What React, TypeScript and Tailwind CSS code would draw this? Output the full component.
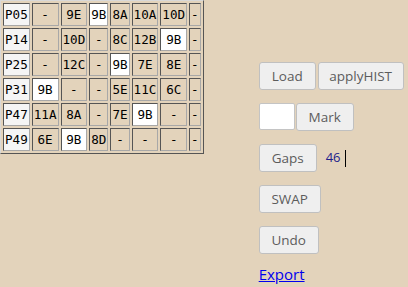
import React from 'react';

const rows: string[][] = [
  ['P05', '-', '9E', '9B', '8A', '10A', '10D', '-'],
  ['P14', '-', '10D', '-', '8C', '12B', '9B', '-'],
  ['P25', '-', '12C', '-', '9B', '7E', '8E', '-'],
  ['P31', '9B', '-', '-', '5E', '11C', '6C', '-'],
  ['P47', '11A', '8A', '-', '7E', '9B', '-', '-'],
  ['P49', '6E', '9B', '8D', '-', '-', '-', '-'],
];

function Btn({ label, className = '' }: { label: string; className?: string }) {
  return (
    <button
      className={`h-[28px] bg-[#efefef] border border-[#c0c0c0] rounded-[3px] text-[13.5px] text-[#5c5c5c] ${className || 'px-[12px]'}`}
    >
      {label}
    </button>
  );
}

export default function App() {
  return (
    <div className="w-[408px] h-[287px] bg-[#e3d3bb] flex font-['Open_Sans',sans-serif]">
      <div className="shrink-0">
        <table className="border-separate border-spacing-[2px] border border-t-[#d9d9d9] border-l-[#d9d9d9] border-r-[#555] border-b-[#555] font-['DejaVu_Sans_Mono',monospace] text-[12.6px] text-black">
          <tbody>
            {rows.map((r, i) => (
              <tr key={i}>
                {r.map((c, j) => {
                  const bg = j === 0 ? 'bg-[#f5f5f5]' : c === '9B' ? 'bg-white' : '';
                  return (
                    <td
                      key={j}
                      className={`h-[23px] px-px py-0 leading-[21px] text-center border border-t-[#555] border-l-[#555] border-r-[#a8a8a8] border-b-[#a8a8a8] ${bg}`}
                    >
                      {c}
                    </td>
                  );
                })}
              </tr>
            ))}
          </tbody>
        </table>
      </div>

      <div className="ml-[55px] mt-[62px] flex flex-col items-start">
        <div className="flex gap-[2px]">
          <Btn label="Load" className="w-[57px]" />
          <Btn label="applyHIST" className="w-[86px]" />
        </div>
        <div className="flex mt-[13px]">
          <div className="w-[36px] h-[27px] bg-white border border-[#c4c4c4] rounded-[2px]" />
          <Btn label="Mark" className="ml-px h-[27px] w-[58px]" />
        </div>
        <div className="flex items-center mt-[13px]">
          <Btn label="Gaps" className="w-[58px]" />
          <span className="ml-[9px] text-[13px] text-[#1e1e8c]">46</span>
          <span className="ml-[4px] w-px h-[17px] bg-black" />
        </div>
        <Btn label="SWAP" className="mt-[13px] w-[62px]" />
        <Btn label="Undo" className="mt-[13px] w-[60px]" />
        <a href="#" className="mt-[10px] text-[15px] text-[#0000ee] underline leading-[20px]">
          Export
        </a>
      </div>
    </div>
  );
}
